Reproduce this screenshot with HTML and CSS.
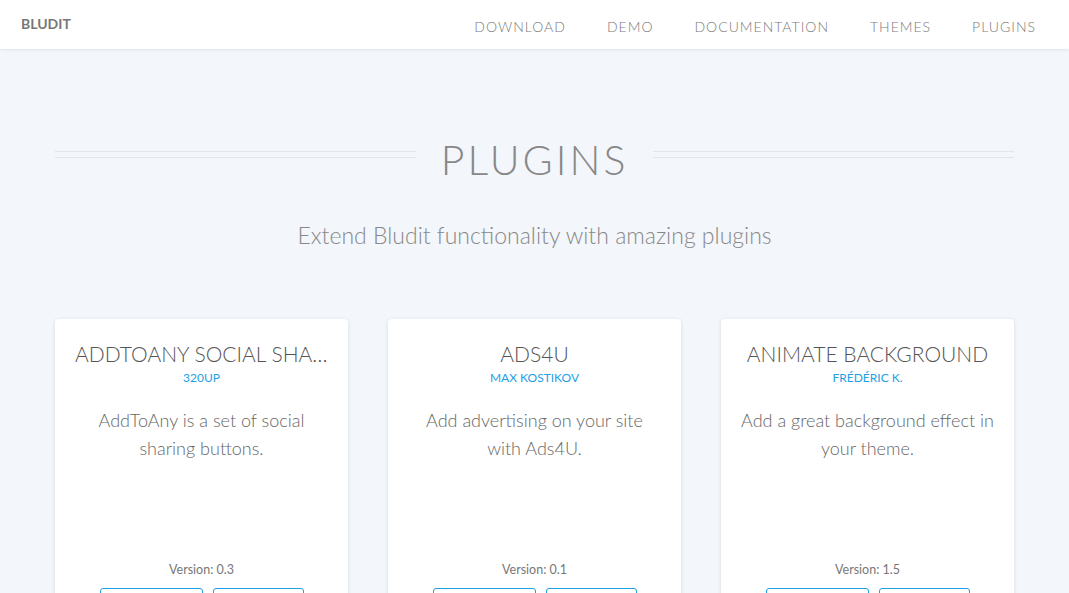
FILE: index.html
```html
<!DOCTYPE html>
<html lang="en">
<head>
  <meta charset="UTF-8" />
  <title>Bludit - Plugins</title>
  <link rel="stylesheet" href="styles.css">
</head>
<body>
  <header class="topbar">
    <a class="brand" href="#">BLUDIT</a>
    <nav class="menu">
      <a href="#">Download</a>
      <a href="#">Demo</a>
      <a href="#">Documentation</a>
      <a href="#">Themes</a>
      <a href="#">Plugins</a>
    </nav>
  </header>

  <main class="page">
    <div class="heading">
      <span class="rule"></span>
      <h1>Plugins</h1>
      <span class="rule"></span>
    </div>
    <p class="lead">Extend Bludit functionality with amazing plugins</p>

    <div class="cards">
      <div class="card">
        <h2 class="card-title">AddToAny Social Sharing</h2>
        <div class="author">320up</div>
        <p class="desc">AddToAny is a set of social sharing buttons.</p>
        <div class="version">Version: 0.3</div>
        <div class="actions">
          <a class="btn btn-wide" href="#">Download</a>
          <a class="btn" href="#">Info</a>
        </div>
      </div>
      <div class="card">
        <h2 class="card-title">Ads4U</h2>
        <div class="author">Max Kostikov</div>
        <p class="desc">Add advertising on your site with Ads4U.</p>
        <div class="version">Version: 0.1</div>
        <div class="actions">
          <a class="btn btn-wide" href="#">Download</a>
          <a class="btn" href="#">Info</a>
        </div>
      </div>
      <div class="card">
        <h2 class="card-title">Animate Background</h2>
        <div class="author">Frédéric K.</div>
        <p class="desc">Add a great background effect in your theme.</p>
        <div class="version">Version: 1.5</div>
        <div class="actions">
          <a class="btn btn-wide" href="#">Download</a>
          <a class="btn" href="#">Info</a>
        </div>
      </div>
    </div>
  </main>
</body>
</html>
```

FILE: styles.css
```css
* { box-sizing: border-box; }
body {
  margin: 0;
  font-family: Lato, "Noto Sans", sans-serif;
  background: #f3f6fa;
  color: #777;
}
a { text-decoration: none; color: inherit; }

.topbar {
  height: 49px;
  background: #fff;
  box-shadow: 0 1px 3px rgba(0, 0, 0, 0.08);
  display: flex;
  align-items: center;
  justify-content: space-between;
  padding: 0 33px 0 21px;
}
.brand {
  font-size: 14px;
  font-weight: 700;
  color: #777;
  margin-top: -2px;
}
.menu {
  display: flex;
  gap: 41px;
}
.menu a {
  font-size: 14px;
  font-weight: 300;
  letter-spacing: 1px;
  text-transform: uppercase;
  color: #7a7a7a;
  margin-top: 4px;
}

.page {
  width: 959px;
  margin: 0 auto;
  padding-top: 91px;
}
.heading {
  display: flex;
  align-items: center;
  gap: 25px;
}
.heading h1 {
  margin: 0;
  font-size: 41px;
  font-weight: 300;
  letter-spacing: 3px;
  text-transform: uppercase;
  color: #888;
  line-height: 40px;
}
.rule {
  flex: 1;
  height: 7px;
  border-top: 1px solid #e2e6ea;
  border-bottom: 1px solid #e2e6ea;
  margin-top: -12px;
}
.lead {
  margin: 41px 0 0;
  text-align: center;
  font-size: 23px;
  font-weight: 300;
  color: #888;
}

.cards {
  display: grid;
  grid-template-columns: repeat(3, minmax(0, 1fr));
  gap: 40px;
  margin-top: 70px;
}
.card {
  background: #fff;
  border-radius: 4px;
  box-shadow: 0 1px 4px rgba(0, 0, 0, 0.12);
  padding: 23px 20px 20px;
  height: 323px;
  display: flex;
  flex-direction: column;
  align-items: center;
  text-align: center;
}
.card-title {
  margin: 0;
  width: 100%;
  font-size: 21px;
  font-weight: 300;
  text-transform: uppercase;
  color: #555;
  white-space: nowrap;
  overflow: hidden;
  text-overflow: ellipsis;
  line-height: 24px;
}
.author {
  margin-top: 4px;
  font-size: 12px;
  text-transform: uppercase;
  color: #1ea0e4;
}
.desc {
  flex: 1;
  margin: 21px 0 0;
  font-size: 18px;
  font-weight: 300;
  line-height: 28px;
  color: #666;
}
.version {
  font-size: 12.5px;
  color: #777;
}
.actions {
  display: flex;
  gap: 10px;
  margin-top: 11px;
}
.btn {
  display: inline-block;
  padding: 8px 14px;
  border: 1px solid #1ea0e4;
  border-radius: 3px;
  font-size: 13px;
  color: #1ea0e4;
  text-transform: uppercase;
  width: 91px;
}
.btn-wide { width: 103px; }
```
